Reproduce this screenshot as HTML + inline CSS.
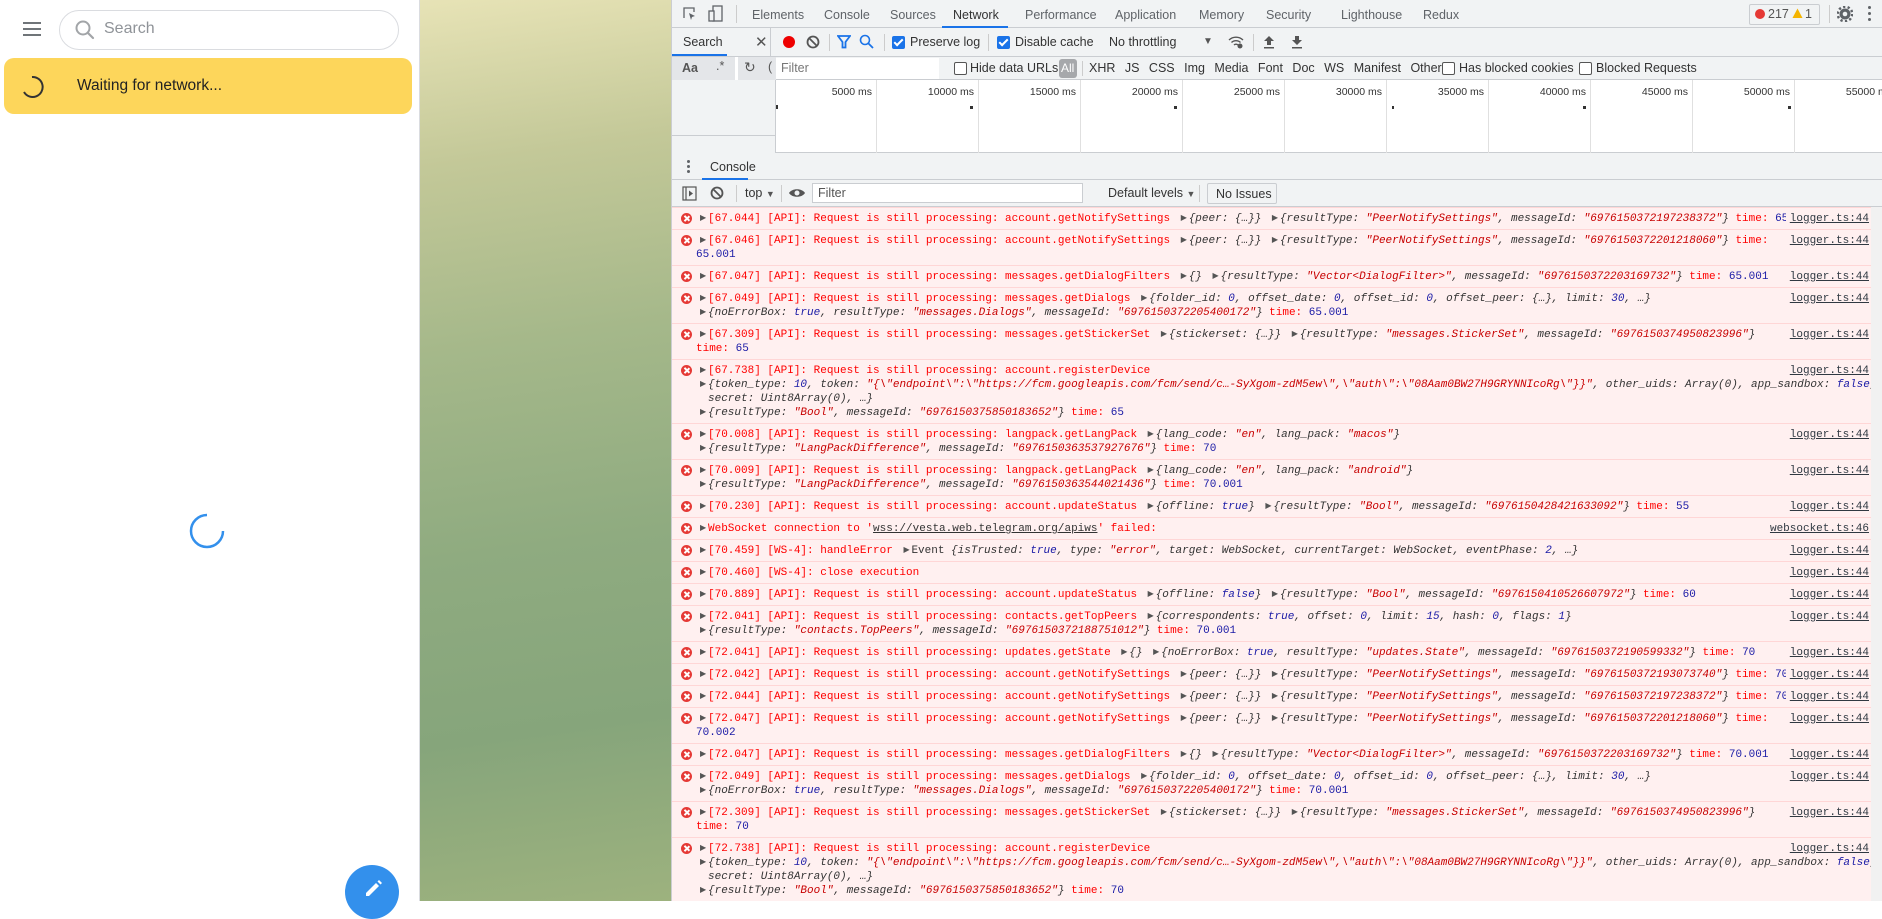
<!DOCTYPE html>
<html><head><meta charset="utf-8">
<style>
*{box-sizing:border-box;margin:0;padding:0}
html,body{width:1882px;height:901px;overflow:hidden;background:#fff;font-family:"Liberation Sans",sans-serif}
#left{position:absolute;left:0;top:0;width:420px;height:901px;background:#fff;border-right:1px solid #dadce0}
#mid{position:absolute;left:420px;top:0;width:251px;height:901px;background:linear-gradient(172deg,#e7e3b6 0%,#c3c898 18%,#a5b88a 38%,#8fab80 60%,#86a57b 80%,#9db27e 100%)}
#dt{position:absolute;left:671px;top:0;width:1211px;height:901px;background:#fff;border-left:1px solid #cbcdd1;font-size:12px;color:#333}
.bar{position:absolute;left:0;width:1211px;background:#f1f3f4;border-bottom:1px solid #cacdd1}
.ab{position:absolute;white-space:nowrap}
.tab{position:absolute;top:8px;font-size:12.5px;color:#5f6368}
.cb{position:absolute;width:13px;height:13px;border-radius:2px}
.cb.on{background:#1a73e8}
.cb.on:after{content:"";position:absolute;left:4px;top:1px;width:3px;height:7px;border:solid #fff;border-width:0 2px 2px 0;transform:rotate(45deg)}
.cb.off{border:1px solid #555;background:#fff}
.sep{position:absolute;width:1px;background:#ccc}
#tl{position:absolute;top:80px;left:0;width:1211px;height:73px;background:#fff;border-bottom:1px solid #cacdd1}
.div{position:absolute;top:0;width:1px;height:73px;background:#e0e0e0}
.lab{position:absolute;top:6px;font-size:10.5px;color:#333;text-align:right;width:90px}
#rows{position:absolute;top:207px;left:0;width:1199px;font-family:"Liberation Mono",monospace;font-size:11px;line-height:14px;color:#f00}
.row{position:relative;background:#fff0f0;border-top:1px solid #ffd6d6;padding:4px 90px 3px 24px;white-space:nowrap;overflow:hidden}
.row .ic{position:absolute;left:9px;top:5px;width:11px;height:11px;border-radius:50%;background:#e53935}
.row .ic:before,.row .ic:after{content:"";position:absolute;left:5px;top:2px;width:1.5px;height:7px;background:#fff;transform:rotate(45deg)}
.row .ic:after{transform:rotate(-45deg)}
.src{position:absolute;right:2px;top:4px;color:#303942;text-decoration:underline;background:#fff0f0;padding-left:4px}
.a{display:inline-block;width:8px;font-size:8px;color:#555;vertical-align:1px;margin-left:4px}
.o{font-style:italic;color:#333}
.s{color:#c80000}
.n{color:#1a1aa6}
</style></head><body>
<div id="left">
  <div class="ab" style="left:23px;top:22px;width:18px;height:2px;background:#707579"></div>
  <div class="ab" style="left:23px;top:28px;width:18px;height:2px;background:#707579"></div>
  <div class="ab" style="left:23px;top:34px;width:18px;height:2px;background:#707579"></div>
  <div class="ab" style="left:59px;top:10px;width:340px;height:40px;border:1px solid #dadce0;border-radius:20px"></div>
  <svg class="ab" style="left:74px;top:19px" width="22" height="22" viewBox="0 0 22 22"><circle cx="9" cy="9" r="6.5" fill="none" stroke="#a2a5a8" stroke-width="2"/><line x1="14" y1="14" x2="19" y2="19" stroke="#a2a5a8" stroke-width="2.2" stroke-linecap="round"/></svg>
  <div class="ab" style="left:104px;top:20px;font-size:16px;color:#8f9398">Search</div>
  <div class="ab" style="left:4px;top:58px;width:408px;height:56px;background:#fdd65b;border-radius:10px"></div>
  <svg class="ab" style="left:20px;top:75px" width="24" height="24" viewBox="0 0 24 24"><path d="M12 2 A10 10 0 1 1 4 17" fill="none" stroke="#333" stroke-width="2"/></svg>
  <div class="ab" style="left:77px;top:77px;font-size:15.5px;color:#222">Waiting for network...</div>
  <svg class="ab" style="left:188px;top:512px" width="38" height="38" viewBox="0 0 38 38"><path d="M19 3 A16 16 0 1 0 35 19" fill="none" stroke="#3390ec" stroke-width="2.5"/></svg>
  <div class="ab" style="left:345px;top:865px;width:54px;height:54px;border-radius:50%;background:#3390ec"></div>
  <svg class="ab" style="left:362px;top:878px" width="22" height="22" viewBox="0 0 22 22"><path d="M4 18 L4 15 L14 5 L17 8 L7 18 Z" fill="#fff"/><path d="M15.5 3.5 L17 2 L20 5 L18.5 6.5 Z" fill="#fff"/></svg>
</div>
<div id="mid"></div>
<div id="dt">
  <div class="bar" style="top:0;height:28px;">
    <svg class="ab" style="left:10px;top:6px" width="16" height="16" viewBox="0 0 16 16"><path d="M2 12V2h10v4" fill="none" stroke="#5f6368" stroke-width="1.3"/><path d="M7 7l6 3-3 1-1 3z" fill="#5f6368"/></svg>
    <svg class="ab" style="left:36px;top:5px" width="16" height="18" viewBox="0 0 16 18"><rect x="5" y="1" width="9" height="15" fill="none" stroke="#5f6368" stroke-width="1.3"/><rect x="1" y="6" width="5" height="10" fill="#f1f3f4" stroke="#5f6368" stroke-width="1.3"/></svg>
    <div class="sep" style="left:64px;top:5px;height:18px"></div>
    <div class="tab" style="left:80px">Elements</div>
    <div class="tab" style="left:152px">Console</div>
    <div class="tab" style="left:218px">Sources</div>
    <div class="tab" style="left:281px;color:#333">Network</div>
    <div class="ab" style="left:270px;top:26px;width:66px;height:2px;background:#1a73e8"></div>
    <div class="tab" style="left:353px">Performance</div>
    <div class="tab" style="left:443px">Application</div>
    <div class="tab" style="left:527px">Memory</div>
    <div class="tab" style="left:594px">Security</div>
    <div class="tab" style="left:669px">Lighthouse</div>
    <div class="tab" style="left:751px">Redux</div>
    <div class="ab" style="left:1077px;top:4px;width:71px;height:21px;border:1px solid #cacdd1;border-radius:2px;background:#f1f3f4"></div>
    <div class="ab" style="left:1083px;top:9px;width:10px;height:10px;border-radius:50%;background:#e53935"></div>
    <div class="ab" style="left:1096px;top:7px;font-size:12.5px;color:#555">217</div>
    <svg class="ab" style="left:1120px;top:8px" width="11" height="11" viewBox="0 0 11 11"><path d="M5.5 0.5 L10.5 10 L0.5 10 Z" fill="#f4b400"/></svg>
    <div class="ab" style="left:1133px;top:7px;font-size:12.5px;color:#555">1</div>
    <div class="sep" style="left:1157px;top:5px;height:18px"></div>
    <svg class="ab" style="left:1165px;top:6px" width="16" height="16" viewBox="0 0 16 16"><circle cx="8" cy="8" r="5.5" fill="#5f6368"/><circle cx="8" cy="8" r="7.3" fill="none" stroke="#5f6368" stroke-width="2.5" stroke-dasharray="2.3 2.3"/><circle cx="8" cy="8" r="2.3" fill="#f1f3f4"/></svg>
    <div class="ab" style="left:1196px;top:6px;width:3px;height:3px;background:#5f6368;border-radius:50%;box-shadow:0 6px 0 #5f6368,0 12px 0 #5f6368"></div>
  </div>
  <div class="bar" style="top:28px;height:29px;">
    <div class="ab" style="left:11px;top:7px;font-size:12.5px">Search</div>
    <div class="ab" style="left:0;top:26px;width:55px;height:2px;background:#1a73e8"></div>
    <div class="ab" style="left:83px;top:5px;font-size:15px;color:#555">✕</div>
    <div class="sep" style="left:98px;top:0;height:29px;background:#cacdd1"></div>
    <div class="ab" style="left:111px;top:8px;width:12px;height:12px;border-radius:50%;background:#e00"></div>
    <svg class="ab" style="left:134px;top:7px" width="14" height="14" viewBox="0 0 14 14"><circle cx="7" cy="7" r="5.5" fill="none" stroke="#555" stroke-width="1.8"/><line x1="3" y1="3" x2="11" y2="11" stroke="#555" stroke-width="1.8"/></svg>
    <div class="sep" style="left:157px;top:6px;height:17px"></div>
    <svg class="ab" style="left:165px;top:7px" width="14" height="14" viewBox="0 0 14 14"><path d="M1 1h12L8.5 7v5.5h-3V7z" fill="none" stroke="#1a73e8" stroke-width="1.8"/></svg>
    <svg class="ab" style="left:187px;top:6px" width="15" height="15" viewBox="0 0 15 15"><circle cx="6" cy="6" r="4.5" fill="none" stroke="#1a73e8" stroke-width="1.6"/><line x1="9.5" y1="9.5" x2="14" y2="14" stroke="#1a73e8" stroke-width="1.8"/></svg>
    <div class="sep" style="left:212px;top:6px;height:17px"></div>
    <div class="cb on" style="left:220px;top:8px"></div>
    <div class="ab" style="left:238px;top:7px;font-size:12.5px">Preserve log</div>
    <div class="sep" style="left:316px;top:6px;height:17px"></div>
    <div class="cb on" style="left:325px;top:8px"></div>
    <div class="ab" style="left:343px;top:7px;font-size:12.5px">Disable cache</div>
    <div class="ab" style="left:437px;top:7px;font-size:12.5px">No throttling</div>
    <div class="ab" style="left:531px;top:8px;font-size:10px;color:#555">▼</div>
    <svg class="ab" style="left:556px;top:6px" width="16" height="16" viewBox="0 0 16 16"><path d="M1 6a10 10 0 0 1 14 0M3.5 8.5a6.5 6.5 0 0 1 9 0M6 11a3 3 0 0 1 4 0" fill="none" stroke="#555" stroke-width="1.4"/><circle cx="12" cy="12" r="2.5" fill="#555"/></svg>
    <div class="sep" style="left:581px;top:6px;height:17px"></div>
    <svg class="ab" style="left:591px;top:7px" width="12" height="14" viewBox="0 0 12 14"><path d="M6 1L1 6h3v4h4V6h3z" fill="#555"/><rect x="1" y="12" width="10" height="1.5" fill="#555"/></svg>
    <svg class="ab" style="left:619px;top:7px" width="12" height="14" viewBox="0 0 12 14"><path d="M6 10L1 5h3V1h4v4h3z" fill="#555"/><rect x="1" y="12" width="10" height="1.5" fill="#555"/></svg>
  </div>
  <div class="bar" style="top:57px;height:23px;">
    <div class="ab" style="left:0;top:0;width:104px;height:23px;background:#e4e6e9"></div>
    <div class="ab" style="left:10px;top:4px;font-size:12.5px;font-weight:bold;color:#555">Aa</div>
    <div class="ab" style="left:44px;top:2px;font-size:12.5px;color:#555">.*</div>
    <div class="ab" style="left:63px;top:0;width:3px;height:23px;background:#fff"></div>
    <div class="ab" style="left:72px;top:2px;font-size:14px;color:#555">↻</div>
    <div class="ab" style="left:96px;top:3px;font-size:12.5px;color:#555">(</div>
    <div class="ab" style="left:104px;top:1px;width:163px;height:21px;background:#fff"></div>
    <div class="ab" style="left:109px;top:4px;font-size:12.5px;color:#777">Filter</div>
    <div class="cb off" style="left:282px;top:5px"></div>
    <div class="ab" style="left:298px;top:4px;font-size:12.5px">Hide data URLs</div>
    <div class="ab" style="left:387px;top:2px;width:18px;height:19px;border-radius:3px;background:#a6a8ab;color:#fff;font-size:12px;padding:2px 0 0 2px">All</div>
    <div class="sep" style="left:410px;top:4px;height:15px"></div>
    <div class="ab" style="left:417px;top:4px;font-size:12.5px;word-spacing:6px">XHR JS CSS Img Media Font Doc WS Manifest Other</div>
    <div class="cb off" style="left:770px;top:5px"></div>
    <div class="ab" style="left:787px;top:4px;font-size:12.5px">Has blocked cookies</div>
    <div class="cb off" style="left:907px;top:5px"></div>
    <div class="ab" style="left:924px;top:4px;font-size:12.5px">Blocked Requests</div>
  </div>
  <div id="tl">
    <div class="ab" style="left:0;top:0;width:104px;height:73px;background:#f1f3f4;border-right:1px solid #cacdd1"></div>
    <div class="ab" style="left:0;top:55px;width:104px;height:1px;background:#cacdd1"></div>
    <div class="div" style="left:204px"></div><div class="lab" style="left:110px">5000 ms</div>
    <div class="div" style="left:306px"></div><div class="lab" style="left:212px">10000 ms</div>
    <div class="div" style="left:408px"></div><div class="lab" style="left:314px">15000 ms</div>
    <div class="div" style="left:510px"></div><div class="lab" style="left:416px">20000 ms</div>
    <div class="div" style="left:612px"></div><div class="lab" style="left:518px">25000 ms</div>
    <div class="div" style="left:714px"></div><div class="lab" style="left:620px">30000 ms</div>
    <div class="div" style="left:816px"></div><div class="lab" style="left:722px">35000 ms</div>
    <div class="div" style="left:918px"></div><div class="lab" style="left:824px">40000 ms</div>
    <div class="div" style="left:1020px"></div><div class="lab" style="left:926px">45000 ms</div>
    <div class="div" style="left:1122px"></div><div class="lab" style="left:1028px">50000 ms</div>
    <div class="lab" style="left:1130px">55000 ms</div>
    <div class="ab" style="left:104px;top:25px;width:2px;height:4px;background:#333"></div>
    <div class="ab" style="left:298px;top:26px;width:3px;height:3px;background:#333"></div>
    <div class="ab" style="left:502px;top:26px;width:3px;height:3px;background:#333"></div>
    <div class="ab" style="left:720px;top:26px;width:2px;height:3px;background:#333"></div>
    <div class="ab" style="left:911px;top:26px;width:3px;height:3px;background:#333"></div>
    <div class="ab" style="left:1116px;top:26px;width:3px;height:3px;background:#333"></div>
  </div>
  <div class="bar" style="top:153px;height:27px;">
    <div class="ab" style="left:15px;top:7px;width:3px;height:3px;background:#5f6368;border-radius:50%;box-shadow:0 5px 0 #5f6368,0 10px 0 #5f6368"></div>
    <div class="ab" style="left:38px;top:7px;font-size:12.5px">Console</div>
    <div class="ab" style="left:30px;top:25px;width:46px;height:2px;background:#1a73e8"></div>
  </div>
  <div class="bar" style="top:180px;height:27px;background:#f1f3f4">
    <svg class="ab" style="left:10px;top:6px" width="15" height="15" viewBox="0 0 15 15"><rect x="1" y="1" width="13" height="13" fill="none" stroke="#555" stroke-width="1.2"/><line x1="4" y1="1" x2="4" y2="14" stroke="#555" stroke-width="1.2"/><path d="M7 4.5l4 3-4 3z" fill="#555"/></svg>
    <svg class="ab" style="left:38px;top:6px" width="14" height="14" viewBox="0 0 14 14"><circle cx="7" cy="7" r="5.5" fill="none" stroke="#555" stroke-width="1.8"/><line x1="3" y1="3" x2="11" y2="11" stroke="#555" stroke-width="1.8"/></svg>
    <div class="sep" style="left:64px;top:5px;height:17px"></div>
    <div class="ab" style="left:73px;top:6px;font-size:12.5px">top <span style="font-size:9px;color:#555">▼</span></div>
    <div class="sep" style="left:109px;top:5px;height:17px"></div>
    <svg class="ab" style="left:116px;top:7px" width="18" height="12" viewBox="0 0 18 12"><path d="M1 6C4 1 14 1 17 6C14 11 4 11 1 6Z" fill="#555"/><circle cx="9" cy="6" r="2.5" fill="#f1f3f4"/></svg>
    <div class="ab" style="left:140px;top:3px;width:271px;height:20px;background:#fff;border:1px solid #cacdd1"></div>
    <div class="ab" style="left:146px;top:6px;font-size:12.5px;color:#555">Filter</div>
    <div class="ab" style="left:436px;top:6px;font-size:12.5px">Default levels <span style="font-size:9px;color:#555">▼</span></div>
    <div class="sep" style="left:527px;top:5px;height:17px"></div>
    <div class="ab" style="left:535px;top:3px;width:70px;height:21px;border:1px solid #cacdd1;border-radius:2px;background:#f1f3f4;font-size:12.5px;padding:3px 0 0 8px">No Issues</div>
  </div>
  <div id="rows">
<div class="row"><i class="ic"></i><span class="src">logger.ts:44</span><span class="a">▶</span>[67.044] [API]: Request is still processing: account.getNotifySettings <span class="a">▶</span><span class="o">{peer: {…}}</span> <span class="a">▶</span><span class="o">{resultType: <span class="s">"PeerNotifySettings"</span>, messageId: <span class="s">"6976150372197238372"</span>}</span> time: <span class="n">65</span></div>
<div class="row"><i class="ic"></i><span class="src">logger.ts:44</span><span class="a">▶</span>[67.046] [API]: Request is still processing: account.getNotifySettings <span class="a">▶</span><span class="o">{peer: {…}}</span> <span class="a">▶</span><span class="o">{resultType: <span class="s">"PeerNotifySettings"</span>, messageId: <span class="s">"6976150372201218060"</span>}</span> time:<br><span class="n">65.001</span></div>
<div class="row"><i class="ic"></i><span class="src">logger.ts:44</span><span class="a">▶</span>[67.047] [API]: Request is still processing: messages.getDialogFilters <span class="a">▶</span><span class="o">{}</span> <span class="a">▶</span><span class="o">{resultType: <span class="s">"Vector&lt;DialogFilter&gt;"</span>, messageId: <span class="s">"6976150372203169732"</span>}</span> time: <span class="n">65.001</span></div>
<div class="row"><i class="ic"></i><span class="src">logger.ts:44</span><span class="a">▶</span>[67.049] [API]: Request is still processing: messages.getDialogs <span class="a">▶</span><span class="o">{folder_id: <span class="n">0</span>, offset_date: <span class="n">0</span>, offset_id: <span class="n">0</span>, offset_peer: {…}, limit: <span class="n">30</span>, …}</span><br><span class="a">▶</span><span class="o">{noErrorBox: <span class="n">true</span>, resultType: <span class="s">"messages.Dialogs"</span>, messageId: <span class="s">"6976150372205400172"</span>}</span> time: <span class="n">65.001</span></div>
<div class="row"><i class="ic"></i><span class="src">logger.ts:44</span><span class="a">▶</span>[67.309] [API]: Request is still processing: messages.getStickerSet <span class="a">▶</span><span class="o">{stickerset: {…}}</span> <span class="a">▶</span><span class="o">{resultType: <span class="s">"messages.StickerSet"</span>, messageId: <span class="s">"6976150374950823996"</span>}</span><br>time: <span class="n">65</span></div>
<div class="row"><i class="ic"></i><span class="src">logger.ts:44</span><span class="a">▶</span>[67.738] [API]: Request is still processing: account.registerDevice<br><span class="a">▶</span><span class="o">{token_type: <span class="n">10</span>, token: <span class="s">"{\"endpoint\":\"https://fcm.googleapis.com/fcm/send/c…-SyXgom-zdM5ew\",\"auth\":\"08Aam0BW27H9GRYNNIcoRg\"}}"</span>, other_uids: Array(0), app_sandbox: <span class="n">false</span>,</span><br><span class="o" style="padding-left:12px">secret: Uint8Array(0), …}</span><br><span class="a">▶</span><span class="o">{resultType: <span class="s">"Bool"</span>, messageId: <span class="s">"6976150375850183652"</span>}</span> time: <span class="n">65</span></div>
<div class="row"><i class="ic"></i><span class="src">logger.ts:44</span><span class="a">▶</span>[70.008] [API]: Request is still processing: langpack.getLangPack <span class="a">▶</span><span class="o">{lang_code: <span class="s">"en"</span>, lang_pack: <span class="s">"macos"</span>}</span><br><span class="a">▶</span><span class="o">{resultType: <span class="s">"LangPackDifference"</span>, messageId: <span class="s">"6976150363537927676"</span>}</span> time: <span class="n">70</span></div>
<div class="row"><i class="ic"></i><span class="src">logger.ts:44</span><span class="a">▶</span>[70.009] [API]: Request is still processing: langpack.getLangPack <span class="a">▶</span><span class="o">{lang_code: <span class="s">"en"</span>, lang_pack: <span class="s">"android"</span>}</span><br><span class="a">▶</span><span class="o">{resultType: <span class="s">"LangPackDifference"</span>, messageId: <span class="s">"6976150363544021436"</span>}</span> time: <span class="n">70.001</span></div>
<div class="row"><i class="ic"></i><span class="src">logger.ts:44</span><span class="a">▶</span>[70.230] [API]: Request is still processing: account.updateStatus <span class="a">▶</span><span class="o">{offline: <span class="n">true</span>}</span> <span class="a">▶</span><span class="o">{resultType: <span class="s">"Bool"</span>, messageId: <span class="s">"6976150428421633092"</span>}</span> time: <span class="n">55</span></div>
<div class="row"><i class="ic"></i><span class="src">websocket.ts:46</span><span class="a">▶</span>WebSocket connection to '<span style="color:#333;text-decoration:underline">wss://vesta.web.telegram.org/apiws</span>' failed:</div>
<div class="row"><i class="ic"></i><span class="src">logger.ts:44</span><span class="a">▶</span>[70.459] [WS-4]: handleError <span class="a">▶</span><span class="o"><span style="font-style:normal">Event</span> {isTrusted: <span class="n">true</span>, type: <span class="s">"error"</span>, target: WebSocket, currentTarget: WebSocket, eventPhase: <span class="n">2</span>, …}</span></div>
<div class="row"><i class="ic"></i><span class="src">logger.ts:44</span><span class="a">▶</span>[70.460] [WS-4]: close execution</div>
<div class="row"><i class="ic"></i><span class="src">logger.ts:44</span><span class="a">▶</span>[70.889] [API]: Request is still processing: account.updateStatus <span class="a">▶</span><span class="o">{offline: <span class="n">false</span>}</span> <span class="a">▶</span><span class="o">{resultType: <span class="s">"Bool"</span>, messageId: <span class="s">"6976150410526607972"</span>}</span> time: <span class="n">60</span></div>
<div class="row"><i class="ic"></i><span class="src">logger.ts:44</span><span class="a">▶</span>[72.041] [API]: Request is still processing: contacts.getTopPeers <span class="a">▶</span><span class="o">{correspondents: <span class="n">true</span>, offset: <span class="n">0</span>, limit: <span class="n">15</span>, hash: <span class="n">0</span>, flags: <span class="n">1</span>}</span><br><span class="a">▶</span><span class="o">{resultType: <span class="s">"contacts.TopPeers"</span>, messageId: <span class="s">"6976150372188751012"</span>}</span> time: <span class="n">70.001</span></div>
<div class="row"><i class="ic"></i><span class="src">logger.ts:44</span><span class="a">▶</span>[72.041] [API]: Request is still processing: updates.getState <span class="a">▶</span><span class="o">{}</span> <span class="a">▶</span><span class="o">{noErrorBox: <span class="n">true</span>, resultType: <span class="s">"updates.State"</span>, messageId: <span class="s">"6976150372190599332"</span>}</span> time: <span class="n">70</span></div>
<div class="row"><i class="ic"></i><span class="src">logger.ts:44</span><span class="a">▶</span>[72.042] [API]: Request is still processing: account.getNotifySettings <span class="a">▶</span><span class="o">{peer: {…}}</span> <span class="a">▶</span><span class="o">{resultType: <span class="s">"PeerNotifySettings"</span>, messageId: <span class="s">"6976150372193073740"</span>}</span> time: <span class="n">70</span></div>
<div class="row"><i class="ic"></i><span class="src">logger.ts:44</span><span class="a">▶</span>[72.044] [API]: Request is still processing: account.getNotifySettings <span class="a">▶</span><span class="o">{peer: {…}}</span> <span class="a">▶</span><span class="o">{resultType: <span class="s">"PeerNotifySettings"</span>, messageId: <span class="s">"6976150372197238372"</span>}</span> time: <span class="n">70</span></div>
<div class="row"><i class="ic"></i><span class="src">logger.ts:44</span><span class="a">▶</span>[72.047] [API]: Request is still processing: account.getNotifySettings <span class="a">▶</span><span class="o">{peer: {…}}</span> <span class="a">▶</span><span class="o">{resultType: <span class="s">"PeerNotifySettings"</span>, messageId: <span class="s">"6976150372201218060"</span>}</span> time:<br><span class="n">70.002</span></div>
<div class="row"><i class="ic"></i><span class="src">logger.ts:44</span><span class="a">▶</span>[72.047] [API]: Request is still processing: messages.getDialogFilters <span class="a">▶</span><span class="o">{}</span> <span class="a">▶</span><span class="o">{resultType: <span class="s">"Vector&lt;DialogFilter&gt;"</span>, messageId: <span class="s">"6976150372203169732"</span>}</span> time: <span class="n">70.001</span></div>
<div class="row"><i class="ic"></i><span class="src">logger.ts:44</span><span class="a">▶</span>[72.049] [API]: Request is still processing: messages.getDialogs <span class="a">▶</span><span class="o">{folder_id: <span class="n">0</span>, offset_date: <span class="n">0</span>, offset_id: <span class="n">0</span>, offset_peer: {…}, limit: <span class="n">30</span>, …}</span><br><span class="a">▶</span><span class="o">{noErrorBox: <span class="n">true</span>, resultType: <span class="s">"messages.Dialogs"</span>, messageId: <span class="s">"6976150372205400172"</span>}</span> time: <span class="n">70.001</span></div>
<div class="row"><i class="ic"></i><span class="src">logger.ts:44</span><span class="a">▶</span>[72.309] [API]: Request is still processing: messages.getStickerSet <span class="a">▶</span><span class="o">{stickerset: {…}}</span> <span class="a">▶</span><span class="o">{resultType: <span class="s">"messages.StickerSet"</span>, messageId: <span class="s">"6976150374950823996"</span>}</span><br>time: <span class="n">70</span></div>
<div class="row"><i class="ic"></i><span class="src">logger.ts:44</span><span class="a">▶</span>[72.738] [API]: Request is still processing: account.registerDevice<br><span class="a">▶</span><span class="o">{token_type: <span class="n">10</span>, token: <span class="s">"{\"endpoint\":\"https://fcm.googleapis.com/fcm/send/c…-SyXgom-zdM5ew\",\"auth\":\"08Aam0BW27H9GRYNNIcoRg\"}}"</span>, other_uids: Array(0), app_sandbox: <span class="n">false</span>,</span><br><span class="o" style="padding-left:12px">secret: Uint8Array(0), …}</span><br><span class="a">▶</span><span class="o">{resultType: <span class="s">"Bool"</span>, messageId: <span class="s">"6976150375850183652"</span>}</span> time: <span class="n">70</span></div>
  </div>
  <div class="ab" style="left:1199px;top:207px;width:12px;height:694px;background:#f1f1f1"></div>
</div>
</body></html>
